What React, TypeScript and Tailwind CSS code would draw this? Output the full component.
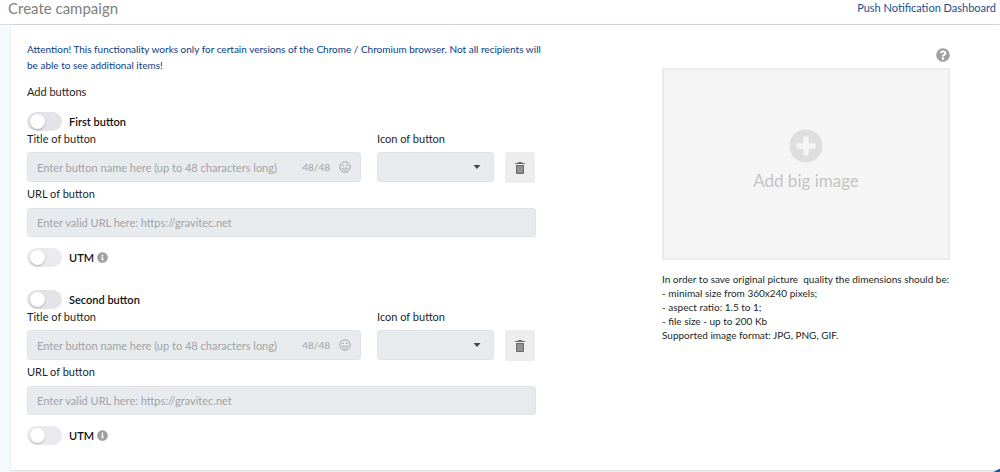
import { useId } from "react";
import { FaInfoCircle, FaPlusCircle, FaQuestionCircle } from "react-icons/fa";

function SmileIcon() {
  return (
    <svg viewBox="0 0 12 12" className="size-3" fill="none" stroke="currentColor" aria-hidden="true">
      <circle cx="6" cy="6" r="5.2" />
      <path d="M3 7.2c.5 1.3 1.6 2 3 2s2.500-.7 3-2z" strokeWidth=".8" />
      <path d="M3.400 4.300h1.500M7.100 4.300h1.500" strokeWidth="1.200" />
    </svg>
  );
}

function TrashIcon() {
  return (
    <svg viewBox="0 0 10 12" className="h-3 w-[10px]" aria-hidden="true">
      <path d="M3 0h4v1h3v1H0V1h3z" fill="#6a6a6a" />
      <path d="M1 3h8v8a1 1 0 0 1-1 1H2a1 1 0 0 1-1-1z" fill="#6a6a6a" />
      <path d="M3 4v7M5 4v7M7 4v7" stroke="#c4c4c4" strokeWidth=".9" />
    </svg>
  );
}

function Toggle({ label, muted = false, info = false }: { label: string; muted?: boolean; info?: boolean }) {
  const id = useId();
  const track = muted ? "bg-[#ebebef]" : "bg-[#e4e3ea]";
  return (
    <div className="flex h-[19px] items-center">
      <input
        id={id}
        type="checkbox"
        role="switch"
        className={`flex h-[19px] w-[35px] shrink-0 cursor-pointer appearance-none items-center rounded-full px-[3px] before:size-[15px] before:rounded-full before:bg-white before:shadow-[0_1px_2px_rgba(0,0,0,0.25)] before:content-[''] checked:justify-end checked:bg-[#174f91] ${track}`}
      />
      <label htmlFor={id} className="ml-[7px] text-[11px] leading-4 font-semibold text-[#101114]">
        {label}
      </label>
      {info && (
        <button type="button" aria-label="About UTM" className="ml-[3px] text-[#a0a0a0]">
          <FaInfoCircle className="size-[11px]" />
        </button>
      )}
    </div>
  );
}

const field = "w-full rounded-[3px] border border-[#e0e4e8] bg-[#e8ebee] text-[11px] text-[#555] placeholder:text-[#a0a3a6]";
const caption = "block text-[11px] leading-4";

function ButtonSettings({ name }: { name: string }) {
  const id = useId();
  return (
    <fieldset className="min-w-0">
      <Toggle label={name} />
      <div className="grid grid-cols-[minmax(0,1fr)_117px_41px] pr-px">
        <div className="mr-4">
          <label htmlFor={`${id}-title`} className={caption}>Title of button</label>
          <div className="relative mt-[5px]">
            <input
              id={`${id}-title`}
              maxLength={48}
              placeholder="Enter button name here (up to 48 characters long)"
              className={`${field} block h-[30px] pr-[62px] pl-[9px]`}
            />
            <div className="absolute inset-y-0 right-[10px] flex items-center gap-[9px] text-[#a0a3a6]">
              <span className="text-[10px]">48/48</span>
              <button type="button" aria-label="Insert emoji">
                <SmileIcon />
              </button>
            </div>
          </div>
        </div>
        <div>
          <label htmlFor={`${id}-icon`} className={caption}>Icon of button</label>
          <div className="relative mt-[5px]">
            <select id={`${id}-icon`} className={`${field} block h-[30px] appearance-none pr-7 pl-2`}>
              <option value="" />
            </select>
            <svg viewBox="0 0 8 4" className="pointer-events-none absolute top-[13px] right-[13px] h-1 w-2" aria-hidden="true">
              <path d="M.5 0h7L4 4z" fill="#444" />
            </svg>
          </div>
        </div>
        <button
          type="button"
          aria-label={`Remove ${name.toLowerCase()}`}
          className="mt-[21px] ml-[11px] flex h-[31px] items-center justify-center rounded-[3px] bg-[#ededed]"
        >
          <TrashIcon />
        </button>
      </div>
      <label htmlFor={`${id}-url`} className={`${caption} mt-[3px]`}>URL of button</label>
      <input
        id={`${id}-url`}
        type="url"
        placeholder="Enter valid URL here: https://gravitec.net"
        className={`${field} mt-[6px] mb-[11px] block h-[29px] px-[9px]`}
      />
      <Toggle label="UTM" muted info />
    </fieldset>
  );
}

export default function App() {
  return (
    <div className="min-h-screen bg-[#f5faff] font-['Lato',sans-serif] text-[#1c1f24]">
      <header className="flex h-[25px] items-start justify-between border-b border-[#dcdcdc] bg-white pr-1 pl-2">
        <h1 className="text-[15px] leading-4 text-[#808080]">Create campaign</h1>
        <a href="#dashboard" className="text-[11px] leading-4 text-[#174f91]">
          Push Notification Dashboard
        </a>
      </header>

      <main className="ml-[11px] grid grid-cols-[minmax(0,509fr)_minmax(0,288fr)] gap-[126px] border-b border-[#dde4e5] bg-white pt-4 pr-[50px] pb-[25px] pl-4 shadow-[0_0_2px_rgba(0,0,0,0.12)]">
        <section>
          <p className="-mr-4 text-[10px] leading-4 text-[#0c3b80]">
            Attention! This functionality works only for certain versions of the Chrome / Chromium browser. Not all recipients will
            <br />
            be able to see additional items!
          </p>
          <h2 className="mt-[11px] mb-3 text-[11px] leading-4">Add buttons</h2>
          <div className="flex flex-col gap-[23px]">
            <ButtonSettings name="First button" />
            <ButtonSettings name="Second button" />
          </div>
        </section>

        <section className="flex flex-col pt-[7px]">
          <button type="button" aria-label="Help with big image" className="self-end text-[#a0a0a0]">
            <FaQuestionCircle className="size-[14px]" />
          </button>
          <button
            type="button"
            className="mt-[6px] flex h-[192px] flex-col items-center justify-center gap-[6px] border-2 border-[#ebebeb] bg-[#f5f5f5] pb-[6px] text-[17px] leading-6 text-[#c4c4c4]"
          >
            <FaPlusCircle className="size-[34px] text-[#dedede]" />
            Add big image
          </button>
          <div className="mt-3 text-[10px] leading-[14px]">
            <p>In order to save original picture&nbsp; quality the dimensions should be:</p>
            <p>- minimal size from 360x240 pixels;</p>
            <p>- aspect ratio: 1.5 to 1;</p>
            <p>- file size - up to 200 Kb</p>
            <p>Supported image format: JPG, PNG, GIF.</p>
          </div>
        </section>
      </main>

      <button
        type="button"
        aria-label="Open support chat"
        className="fixed -right-10 -bottom-[55px] size-[60px] rounded-full bg-[#17589c]"
      />
    </div>
  );
}
